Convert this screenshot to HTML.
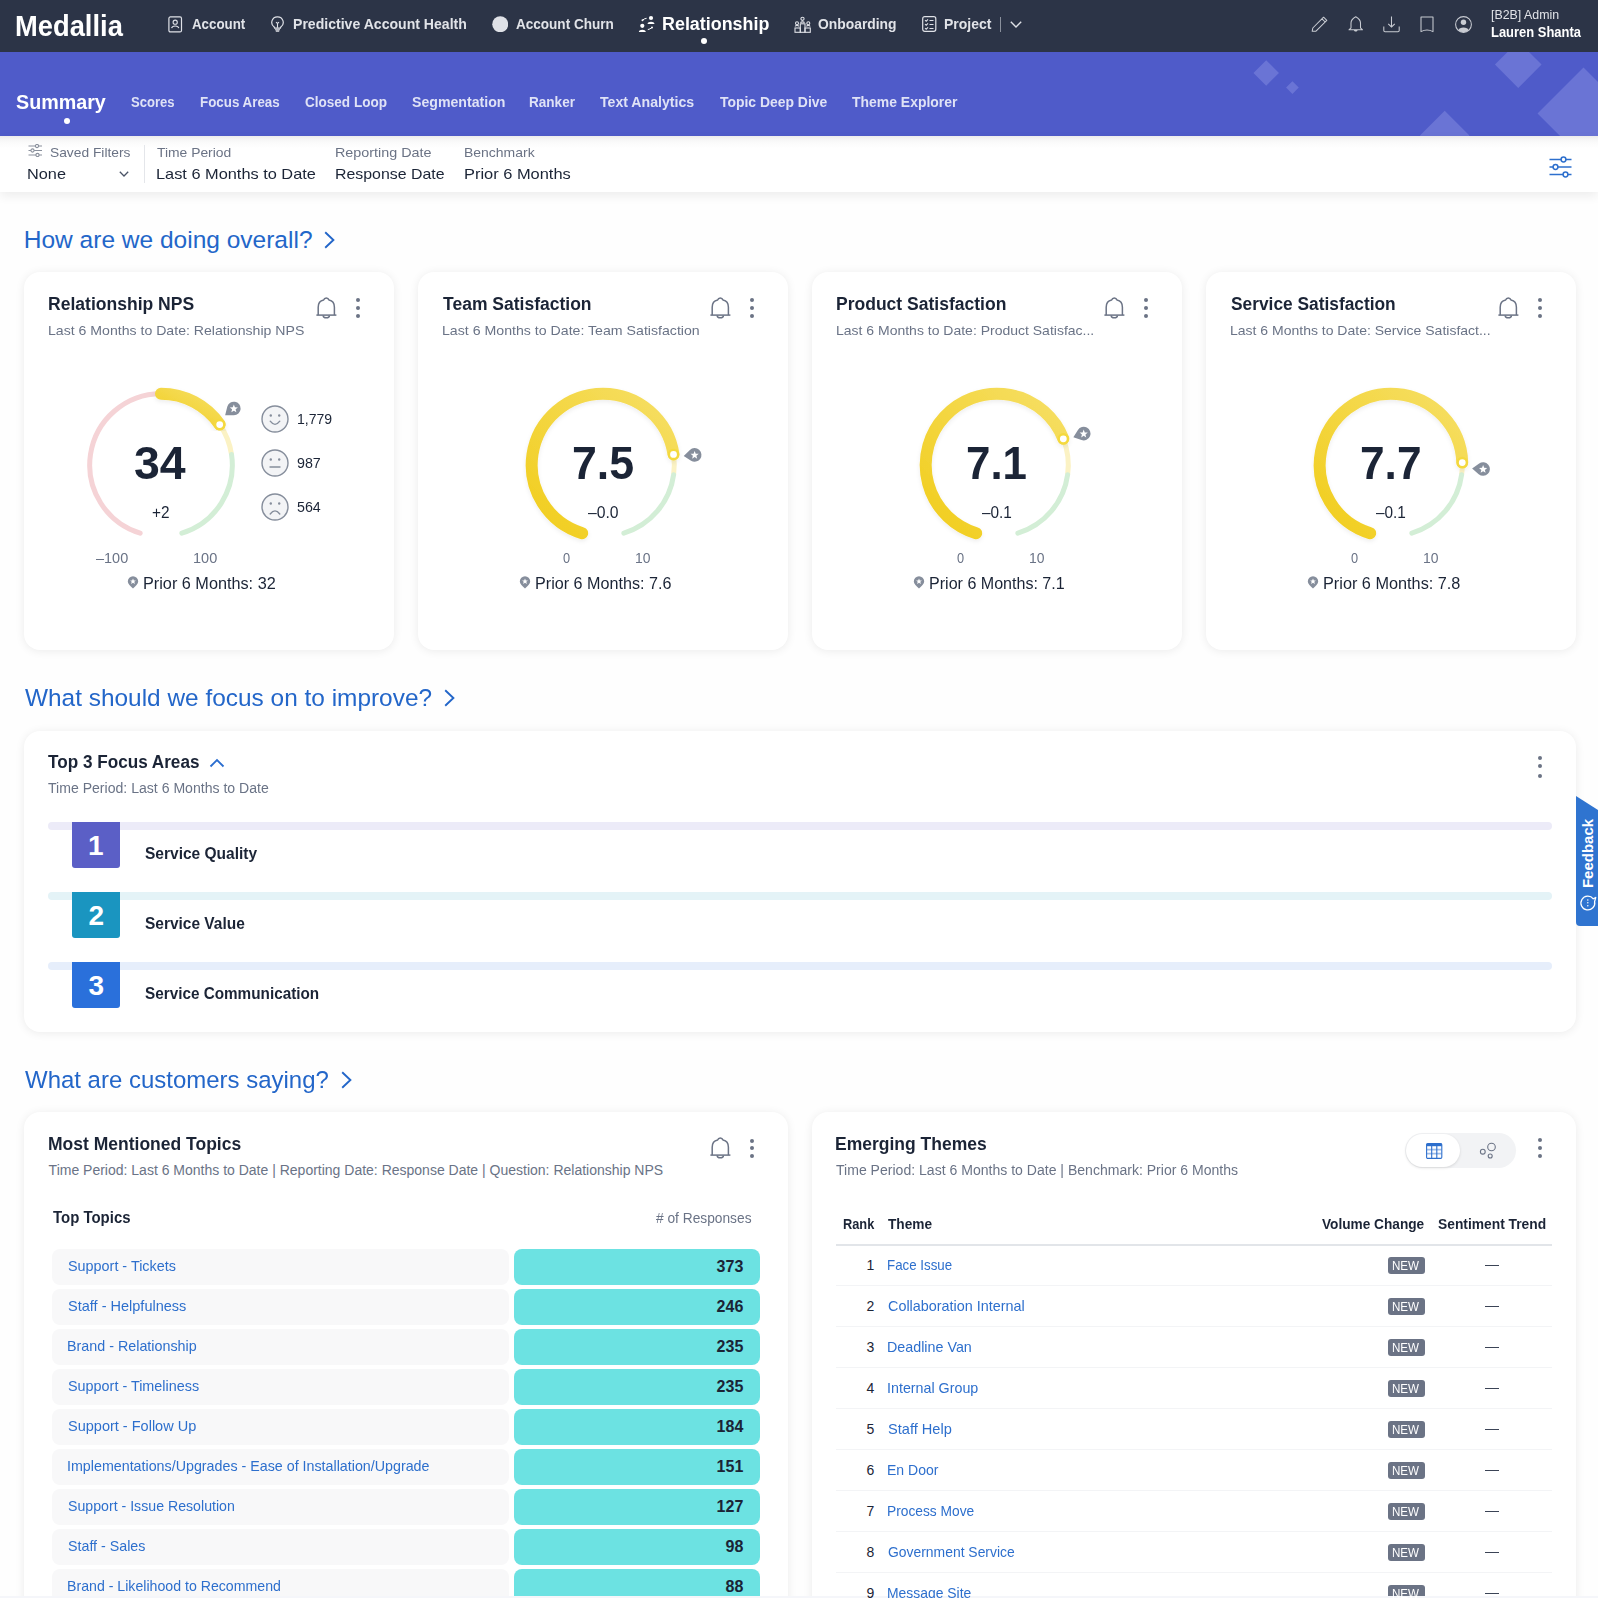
<!DOCTYPE html>
<html><head><meta charset="utf-8"><title>Medallia Summary</title>
<style>
*{box-sizing:border-box;margin:0;padding:0}
html,body{width:1598px;height:1598px;overflow:hidden;background:#fefefe;font-family:"Liberation Sans",sans-serif}
.a{position:absolute}
.t{position:absolute;white-space:nowrap;transform-origin:0 0}
.card{position:absolute;background:#fff;border-radius:16px;box-shadow:0 1px 10px rgba(0,0,0,0.08)}
#top{position:absolute;left:0;top:0;width:1598px;height:52px;background:#2c3447}
#sub{position:absolute;left:0;top:52px;width:1598px;height:84px;background:#4f5bc9;overflow:hidden}
#sub i{position:absolute;display:block;background:#6a74d5;transform:rotate(45deg)}
#filt{position:absolute;left:0;top:136px;width:1598px;height:56px;background:linear-gradient(to bottom,#ececec 0px,#f5f5f5 3px,#fbfbfb 7px,#fff 12px);box-shadow:0 4px 10px rgba(0,0,0,0.07)}
</style></head><body>
<div id="top"></div>
<div id="sub">
<i style="left:1256.8px;top:11.7px;width:18.4px;height:18.4px"></i>
<i style="left:1287.6px;top:30.6px;width:8.8px;height:8.8px"></i>
<i style="left:1501.7px;top:-4.1px;width:32.5px;height:32.5px"></i>
<i style="left:1551.1px;top:28.5px;width:65px;height:65px"></i>
<i style="left:1427.1px;top:66.3px;width:35.4px;height:35.4px"></i>
</div>
<div id="filt"></div>
<div class="card" style="left:24px;top:272px;width:370px;height:378px"></div>
<svg class="a" style="left:315.8px;top:297.3px" width="21" height="22" viewBox="0 0 21 22"><g fill="none" stroke="#6b7385" stroke-width="1.5" stroke-linejoin="round"><path d="M2.2 18.1 L2.2 10.2 C2.2 5.8 4.6 3.6 7.6 3 C8.1 1.5 9.2 0.9 10.3 0.9 C11.4 0.9 12.5 1.5 13 3 C16 3.6 18.4 5.8 18.4 10.2 L18.4 18.1"/><path d="M0.4 18.1 H20.4"/><path d="M7.2 18.4 C7.2 21.6 13.4 21.6 13.4 18.4"/></g></svg>
<div class="a" style="left:356.0px;top:298.0px;width:4.0px;height:4.0px;border-radius:50%;background:#6b7385"></div>
<div class="a" style="left:356.0px;top:306.0px;width:4.0px;height:4.0px;border-radius:50%;background:#6b7385"></div>
<div class="a" style="left:356.0px;top:314.0px;width:4.0px;height:4.0px;border-radius:50%;background:#6b7385"></div>
<svg class="a" style="left:50.5px;top:354.5px" width="220" height="220" viewBox="0 0 220 220"><defs><linearGradient id="yg1" x1="0" y1="1" x2="1" y2="0"><stop offset="0" stop-color="#f1cd1c"/><stop offset="1" stop-color="#f6df66"/></linearGradient><radialGradient id="sh1" cx="0.5" cy="0.5" r="0.5"><stop offset="0.82" stop-color="#000" stop-opacity="0"/><stop offset="1" stop-color="#000" stop-opacity="0.05"/></radialGradient><filter id="ds1" x="-20%" y="-20%" width="140%" height="140%"><feDropShadow dx="0" dy="2" stdDeviation="2.2" flood-color="#000" flood-opacity="0.07"/></filter></defs><path d="M89.15 178.18 A71.3 71.3 0 0 1 110.00 38.70" stroke="#f5d3d6" stroke-width="5" fill="none" stroke-linecap="round"/><path d="M168.70 69.53 A71.3 71.3 0 0 1 180.52 99.46" stroke="#fbf2c4" stroke-width="5" fill="none"/><path d="M180.52 99.46 A71.3 71.3 0 0 1 130.85 178.18" stroke="#d3eed6" stroke-width="5" fill="none" stroke-linecap="round"/><path d="M110.00 38.70 A71.3 71.3 0 0 1 168.70 69.53" stroke="url(#yg1)" stroke-width="12" fill="none" stroke-linecap="round" filter="url(#ds1)"/><circle cx="168.70" cy="69.53" r="4.6" fill="#fff" stroke="#f4d93e" stroke-width="2.4"/><g transform="translate(174.16 60.23) rotate(-37.80)"><path d="M0 0 L6.8 -5.34 A6.8 6.8 0 1 1 6.8 5.34 Z" fill="#868e9c"/></g><polygon points="182.85,49.49 183.94,52.29 186.94,52.46 184.61,54.36 185.38,57.27 182.85,55.64 180.32,57.27 181.09,54.36 178.76,52.46 181.76,52.29" fill="#fff"/></svg>
<svg class="a" style="left:127.4px;top:576.3px" width="12" height="13" viewBox="0 0 12 13"><path d="M6 12.6 C3.5 10 0.8 7.6 0.8 5.4 A5.2 5.2 0 0 1 11.2 5.4 C11.2 7.6 8.5 10 6 12.6 Z" fill="#868e9c"/><polygon points="6,2.4 6.85,4.4 8.9,4.5 7.3,5.8 7.85,7.9 6,6.7 4.15,7.9 4.7,5.8 3.1,4.5 5.15,4.4" fill="#fff"/></svg>
<div class="card" style="left:418px;top:272px;width:370px;height:378px"></div>
<svg class="a" style="left:709.8px;top:297.3px" width="21" height="22" viewBox="0 0 21 22"><g fill="none" stroke="#6b7385" stroke-width="1.5" stroke-linejoin="round"><path d="M2.2 18.1 L2.2 10.2 C2.2 5.8 4.6 3.6 7.6 3 C8.1 1.5 9.2 0.9 10.3 0.9 C11.4 0.9 12.5 1.5 13 3 C16 3.6 18.4 5.8 18.4 10.2 L18.4 18.1"/><path d="M0.4 18.1 H20.4"/><path d="M7.2 18.4 C7.2 21.6 13.4 21.6 13.4 18.4"/></g></svg>
<div class="a" style="left:750.0px;top:298.0px;width:4.0px;height:4.0px;border-radius:50%;background:#6b7385"></div>
<div class="a" style="left:750.0px;top:306.0px;width:4.0px;height:4.0px;border-radius:50%;background:#6b7385"></div>
<div class="a" style="left:750.0px;top:314.0px;width:4.0px;height:4.0px;border-radius:50%;background:#6b7385"></div>
<svg class="a" style="left:493.4px;top:354.5px" width="220" height="220" viewBox="0 0 220 220"><defs><linearGradient id="yg2" x1="0" y1="1" x2="1" y2="0"><stop offset="0" stop-color="#f1cd1c"/><stop offset="1" stop-color="#f6df66"/></linearGradient><radialGradient id="sh2" cx="0.5" cy="0.5" r="0.5"><stop offset="0.82" stop-color="#000" stop-opacity="0"/><stop offset="1" stop-color="#000" stop-opacity="0.05"/></radialGradient><filter id="ds2" x="-20%" y="-20%" width="140%" height="140%"><feDropShadow dx="0" dy="2" stdDeviation="2.2" flood-color="#000" flood-opacity="0.07"/></filter></defs><path d="M180.52 99.46 A71.3 71.3 0 0 1 180.64 119.68" stroke="#fbf2c4" stroke-width="5" fill="none"/><path d="M180.64 119.68 A71.3 71.3 0 0 1 130.85 178.18" stroke="#d3eed6" stroke-width="5" fill="none" stroke-linecap="round"/><path d="M89.15 178.18 A71.3 71.3 0 1 1 180.52 99.46" stroke="url(#yg2)" stroke-width="12" fill="none" stroke-linecap="round" filter="url(#ds2)"/><circle cx="180.52" cy="99.46" r="4.6" fill="#fff" stroke="#f4d93e" stroke-width="2.4"/><g transform="translate(190.71 101.09) rotate(-6.30)"><path d="M0 0 L6.8 -5.34 A6.8 6.8 0 1 1 6.8 5.34 Z" fill="#868e9c"/></g><polygon points="201.64,95.88 202.73,98.69 205.73,98.85 203.40,100.75 204.17,103.66 201.64,102.03 199.12,103.66 199.88,100.75 197.55,98.85 200.56,98.69" fill="#fff"/></svg>
<svg class="a" style="left:519.4px;top:576.3px" width="12" height="13" viewBox="0 0 12 13"><path d="M6 12.6 C3.5 10 0.8 7.6 0.8 5.4 A5.2 5.2 0 0 1 11.2 5.4 C11.2 7.6 8.5 10 6 12.6 Z" fill="#868e9c"/><polygon points="6,2.4 6.85,4.4 8.9,4.5 7.3,5.8 7.85,7.9 6,6.7 4.15,7.9 4.7,5.8 3.1,4.5 5.15,4.4" fill="#fff"/></svg>
<div class="card" style="left:812px;top:272px;width:370px;height:378px"></div>
<svg class="a" style="left:1103.8px;top:297.3px" width="21" height="22" viewBox="0 0 21 22"><g fill="none" stroke="#6b7385" stroke-width="1.5" stroke-linejoin="round"><path d="M2.2 18.1 L2.2 10.2 C2.2 5.8 4.6 3.6 7.6 3 C8.1 1.5 9.2 0.9 10.3 0.9 C11.4 0.9 12.5 1.5 13 3 C16 3.6 18.4 5.8 18.4 10.2 L18.4 18.1"/><path d="M0.4 18.1 H20.4"/><path d="M7.2 18.4 C7.2 21.6 13.4 21.6 13.4 18.4"/></g></svg>
<div class="a" style="left:1144.0px;top:298.0px;width:4.0px;height:4.0px;border-radius:50%;background:#6b7385"></div>
<div class="a" style="left:1144.0px;top:306.0px;width:4.0px;height:4.0px;border-radius:50%;background:#6b7385"></div>
<div class="a" style="left:1144.0px;top:314.0px;width:4.0px;height:4.0px;border-radius:50%;background:#6b7385"></div>
<svg class="a" style="left:887.4px;top:354.5px" width="220" height="220" viewBox="0 0 220 220"><defs><linearGradient id="yg3" x1="0" y1="1" x2="1" y2="0"><stop offset="0" stop-color="#f1cd1c"/><stop offset="1" stop-color="#f6df66"/></linearGradient><radialGradient id="sh3" cx="0.5" cy="0.5" r="0.5"><stop offset="0.82" stop-color="#000" stop-opacity="0"/><stop offset="1" stop-color="#000" stop-opacity="0.05"/></radialGradient><filter id="ds3" x="-20%" y="-20%" width="140%" height="140%"><feDropShadow dx="0" dy="2" stdDeviation="2.2" flood-color="#000" flood-opacity="0.07"/></filter></defs><path d="M176.32 83.82 A71.3 71.3 0 0 1 180.64 119.68" stroke="#fbf2c4" stroke-width="5" fill="none"/><path d="M180.64 119.68 A71.3 71.3 0 0 1 130.85 178.18" stroke="#d3eed6" stroke-width="5" fill="none" stroke-linecap="round"/><path d="M89.15 178.18 A71.3 71.3 0 1 1 176.32 83.82" stroke="url(#yg3)" stroke-width="12" fill="none" stroke-linecap="round" filter="url(#ds3)"/><circle cx="176.32" cy="83.82" r="4.6" fill="#fff" stroke="#f4d93e" stroke-width="2.4"/><g transform="translate(186.35 82.36) rotate(-19.90)"><path d="M0 0 L6.8 -5.34 A6.8 6.8 0 1 1 6.8 5.34 Z" fill="#868e9c"/></g><polygon points="196.69,74.62 197.78,77.42 200.78,77.59 198.45,79.49 199.22,82.40 196.69,80.77 194.17,82.40 194.94,79.49 192.61,77.59 195.61,77.42" fill="#fff"/></svg>
<svg class="a" style="left:913.4px;top:576.3px" width="12" height="13" viewBox="0 0 12 13"><path d="M6 12.6 C3.5 10 0.8 7.6 0.8 5.4 A5.2 5.2 0 0 1 11.2 5.4 C11.2 7.6 8.5 10 6 12.6 Z" fill="#868e9c"/><polygon points="6,2.4 6.85,4.4 8.9,4.5 7.3,5.8 7.85,7.9 6,6.7 4.15,7.9 4.7,5.8 3.1,4.5 5.15,4.4" fill="#fff"/></svg>
<div class="card" style="left:1206px;top:272px;width:370px;height:378px"></div>
<svg class="a" style="left:1497.8px;top:297.3px" width="21" height="22" viewBox="0 0 21 22"><g fill="none" stroke="#6b7385" stroke-width="1.5" stroke-linejoin="round"><path d="M2.2 18.1 L2.2 10.2 C2.2 5.8 4.6 3.6 7.6 3 C8.1 1.5 9.2 0.9 10.3 0.9 C11.4 0.9 12.5 1.5 13 3 C16 3.6 18.4 5.8 18.4 10.2 L18.4 18.1"/><path d="M0.4 18.1 H20.4"/><path d="M7.2 18.4 C7.2 21.6 13.4 21.6 13.4 18.4"/></g></svg>
<div class="a" style="left:1538.0px;top:298.0px;width:4.0px;height:4.0px;border-radius:50%;background:#6b7385"></div>
<div class="a" style="left:1538.0px;top:306.0px;width:4.0px;height:4.0px;border-radius:50%;background:#6b7385"></div>
<div class="a" style="left:1538.0px;top:314.0px;width:4.0px;height:4.0px;border-radius:50%;background:#6b7385"></div>
<svg class="a" style="left:1281.4px;top:354.5px" width="220" height="220" viewBox="0 0 220 220"><defs><linearGradient id="yg4" x1="0" y1="1" x2="1" y2="0"><stop offset="0" stop-color="#f1cd1c"/><stop offset="1" stop-color="#f6df66"/></linearGradient><radialGradient id="sh4" cx="0.5" cy="0.5" r="0.5"><stop offset="0.82" stop-color="#000" stop-opacity="0"/><stop offset="1" stop-color="#000" stop-opacity="0.05"/></radialGradient><filter id="ds4" x="-20%" y="-20%" width="140%" height="140%"><feDropShadow dx="0" dy="2" stdDeviation="2.2" flood-color="#000" flood-opacity="0.07"/></filter></defs><path d="M181.26 107.54 A71.3 71.3 0 0 1 180.64 119.68" stroke="#fbf2c4" stroke-width="5" fill="none"/><path d="M180.64 119.68 A71.3 71.3 0 0 1 130.85 178.18" stroke="#d3eed6" stroke-width="5" fill="none" stroke-linecap="round"/><path d="M89.15 178.18 A71.3 71.3 0 1 1 181.26 107.54" stroke="url(#yg4)" stroke-width="12" fill="none" stroke-linecap="round" filter="url(#ds4)"/><circle cx="181.26" cy="107.54" r="4.6" fill="#fff" stroke="#f4d93e" stroke-width="2.4"/><g transform="translate(191.12 113.54) rotate(2.50)"><path d="M0 0 L6.8 -5.34 A6.8 6.8 0 1 1 6.8 5.34 Z" fill="#868e9c"/></g><polygon points="202.11,110.02 203.20,112.83 206.20,112.99 203.87,114.89 204.64,117.80 202.11,116.17 199.58,117.80 200.35,114.89 198.02,112.99 201.02,112.83" fill="#fff"/></svg>
<svg class="a" style="left:1307.4px;top:576.3px" width="12" height="13" viewBox="0 0 12 13"><path d="M6 12.6 C3.5 10 0.8 7.6 0.8 5.4 A5.2 5.2 0 0 1 11.2 5.4 C11.2 7.6 8.5 10 6 12.6 Z" fill="#868e9c"/><polygon points="6,2.4 6.85,4.4 8.9,4.5 7.3,5.8 7.85,7.9 6,6.7 4.15,7.9 4.7,5.8 3.1,4.5 5.15,4.4" fill="#fff"/></svg>
<svg class="a" style="left:259.8px;top:404.4px" width="30" height="30" viewBox="-15 -15 30 30"><circle cx="0" cy="0" r="13" fill="#f3f4f6" stroke="#868e9c" stroke-width="1.4"/><circle cx="-4.2" cy="-3.5" r="1.2" fill="#868e9c"/><circle cx="4.2" cy="-3.5" r="1.2" fill="#868e9c"/><path d="M-4.8 2.2 Q0 8.5 4.8 2.2" fill="none" stroke="#868e9c" stroke-width="1.4" stroke-linecap="round"/></svg>
<svg class="a" style="left:259.8px;top:448.4px" width="30" height="30" viewBox="-15 -15 30 30"><circle cx="0" cy="0" r="13" fill="#f3f4f6" stroke="#868e9c" stroke-width="1.4"/><circle cx="-4.2" cy="-3.5" r="1.2" fill="#868e9c"/><circle cx="4.2" cy="-3.5" r="1.2" fill="#868e9c"/><path d="M-5 4 L5 4" fill="none" stroke="#868e9c" stroke-width="1.4" stroke-linecap="round"/></svg>
<svg class="a" style="left:259.8px;top:492.4px" width="30" height="30" viewBox="-15 -15 30 30"><circle cx="0" cy="0" r="13" fill="#f3f4f6" stroke="#868e9c" stroke-width="1.4"/><circle cx="-4.2" cy="-3.5" r="1.2" fill="#868e9c"/><circle cx="4.2" cy="-3.5" r="1.2" fill="#868e9c"/><path d="M-4.8 7 Q0 0.8 4.8 7" fill="none" stroke="#868e9c" stroke-width="1.4" stroke-linecap="round"/></svg>
<div class="card" style="left:24px;top:731px;width:1552px;height:301px"></div>
<svg class="a" style="left:209px;top:757px" width="16" height="11" viewBox="0 0 16 11"><path d="M1.5 9.5 L8 3 L14.5 9.5" fill="none" stroke="#2a6dcf" stroke-width="1.8"/></svg>
<div class="a" style="left:1538.0px;top:756.0px;width:4.0px;height:4.0px;border-radius:50%;background:#6b7385"></div>
<div class="a" style="left:1538.0px;top:764.0px;width:4.0px;height:4.0px;border-radius:50%;background:#6b7385"></div>
<div class="a" style="left:1538.0px;top:774.0px;width:4.0px;height:4.0px;border-radius:50%;background:#6b7385"></div>
<div class="a" style="left:48px;top:822.3px;width:1504px;height:8px;border-radius:4px;background:#ecebf8"></div>
<div class="a" style="left:72px;top:822.3px;width:48px;height:46px;border-radius:0 0 3px 3px;background:#5b5fc6"></div>
<div class="a" style="left:48px;top:892.3px;width:1504px;height:8px;border-radius:4px;background:#e4f3f7"></div>
<div class="a" style="left:72px;top:892.3px;width:48px;height:46px;border-radius:0 0 3px 3px;background:#1a95c0"></div>
<div class="a" style="left:48px;top:962.3px;width:1504px;height:8px;border-radius:4px;background:#e6eefb"></div>
<div class="a" style="left:72px;top:962.3px;width:48px;height:46px;border-radius:0 0 3px 3px;background:#2a70db"></div>
<div class="card" style="left:24px;top:1112px;width:764px;height:600px"></div>
<svg class="a" style="left:709.7px;top:1137.4px" width="21" height="22" viewBox="0 0 21 22"><g fill="none" stroke="#6b7385" stroke-width="1.5" stroke-linejoin="round"><path d="M2.2 18.1 L2.2 10.2 C2.2 5.8 4.6 3.6 7.6 3 C8.1 1.5 9.2 0.9 10.3 0.9 C11.4 0.9 12.5 1.5 13 3 C16 3.6 18.4 5.8 18.4 10.2 L18.4 18.1"/><path d="M0.4 18.1 H20.4"/><path d="M7.2 18.4 C7.2 21.6 13.4 21.6 13.4 18.4"/></g></svg>
<div class="a" style="left:750.0px;top:1139.0px;width:4.0px;height:4.0px;border-radius:50%;background:#6b7385"></div>
<div class="a" style="left:750.0px;top:1146.0px;width:4.0px;height:4.0px;border-radius:50%;background:#6b7385"></div>
<div class="a" style="left:750.0px;top:1154.0px;width:4.0px;height:4.0px;border-radius:50%;background:#6b7385"></div>
<div class="a" style="left:52px;top:1249px;width:456.5px;height:35.5px;border-radius:8px;background:#f8f8f9"></div>
<div class="a" style="left:513.7px;top:1249px;width:246.3px;height:35.5px;border-radius:8px;background:#6ce2e2"></div>
<div class="a" style="left:52px;top:1289px;width:456.5px;height:35.5px;border-radius:8px;background:#f8f8f9"></div>
<div class="a" style="left:513.7px;top:1289px;width:246.3px;height:35.5px;border-radius:8px;background:#6ce2e2"></div>
<div class="a" style="left:52px;top:1329px;width:456.5px;height:35.5px;border-radius:8px;background:#f8f8f9"></div>
<div class="a" style="left:513.7px;top:1329px;width:246.3px;height:35.5px;border-radius:8px;background:#6ce2e2"></div>
<div class="a" style="left:52px;top:1369px;width:456.5px;height:35.5px;border-radius:8px;background:#f8f8f9"></div>
<div class="a" style="left:513.7px;top:1369px;width:246.3px;height:35.5px;border-radius:8px;background:#6ce2e2"></div>
<div class="a" style="left:52px;top:1409px;width:456.5px;height:35.5px;border-radius:8px;background:#f8f8f9"></div>
<div class="a" style="left:513.7px;top:1409px;width:246.3px;height:35.5px;border-radius:8px;background:#6ce2e2"></div>
<div class="a" style="left:52px;top:1449px;width:456.5px;height:35.5px;border-radius:8px;background:#f8f8f9"></div>
<div class="a" style="left:513.7px;top:1449px;width:246.3px;height:35.5px;border-radius:8px;background:#6ce2e2"></div>
<div class="a" style="left:52px;top:1489px;width:456.5px;height:35.5px;border-radius:8px;background:#f8f8f9"></div>
<div class="a" style="left:513.7px;top:1489px;width:246.3px;height:35.5px;border-radius:8px;background:#6ce2e2"></div>
<div class="a" style="left:52px;top:1529px;width:456.5px;height:35.5px;border-radius:8px;background:#f8f8f9"></div>
<div class="a" style="left:513.7px;top:1529px;width:246.3px;height:35.5px;border-radius:8px;background:#6ce2e2"></div>
<div class="a" style="left:52px;top:1569px;width:456.5px;height:35.5px;border-radius:8px;background:#f8f8f9"></div>
<div class="a" style="left:513.7px;top:1569px;width:246.3px;height:35.5px;border-radius:8px;background:#6ce2e2"></div>
<div class="card" style="left:812px;top:1112px;width:764px;height:600px"></div>
<div class="a" style="left:1405px;top:1132.7px;width:110.8px;height:35.4px;border-radius:18px;background:#f2f3f5"></div>
<div class="a" style="left:1406px;top:1134px;width:53.8px;height:32.6px;border-radius:17px;background:#fff;box-shadow:0 1px 3px rgba(0,0,0,0.12)"></div>
<svg class="a" style="left:1426px;top:1142.5px" width="17" height="16" viewBox="0 0 17 16"><rect x="0.6" y="0.6" width="15.2" height="14.8" rx="1.2" fill="none" stroke="#2d6fcd" stroke-width="1.1"/><rect x="0.6" y="0.6" width="15.2" height="2.6" fill="#2d6fcd"/><path d="M5.7 3 V15.4 M10.8 3 V15.4" stroke="#2d6fcd" stroke-width="1.1"/><path d="M1 6.7 H15.4 M1 10.6 H15.4" stroke="#2d6fcd" stroke-width="1.8" opacity="0.45"/></svg>
<svg class="a" style="left:1478px;top:1141px" width="20" height="20" viewBox="0 0 20 20"><circle cx="4.8" cy="10.7" r="2.4" fill="none" stroke="#6b7385" stroke-width="1.1"/><circle cx="13.5" cy="6" r="3.8" fill="none" stroke="#6b7385" stroke-width="1.1"/><circle cx="12.2" cy="15" r="2" fill="none" stroke="#6b7385" stroke-width="1.1"/></svg>
<div class="a" style="left:1538.0px;top:1138.0px;width:4.0px;height:4.0px;border-radius:50%;background:#6b7385"></div>
<div class="a" style="left:1538.0px;top:1146.0px;width:4.0px;height:4.0px;border-radius:50%;background:#6b7385"></div>
<div class="a" style="left:1538.0px;top:1154.0px;width:4.0px;height:4.0px;border-radius:50%;background:#6b7385"></div>
<div class="a" style="left:836px;top:1244px;width:716px;height:2px;background:#e2e5e9"></div>
<div class="a" style="left:1387.7px;top:1256.7px;width:37px;height:17.7px;border-radius:3px;background:#6b7385"></div>
<div class="a" style="left:1484.6px;top:1265.3px;width:14px;height:1px;background:#3b4456"></div>
<div class="a" style="left:836px;top:1285.3px;width:716px;height:1px;background:#f3f4f6"></div>
<div class="a" style="left:1387.7px;top:1297.7px;width:37px;height:17.7px;border-radius:3px;background:#6b7385"></div>
<div class="a" style="left:1484.6px;top:1306.3px;width:14px;height:1px;background:#3b4456"></div>
<div class="a" style="left:836px;top:1326.3px;width:716px;height:1px;background:#f3f4f6"></div>
<div class="a" style="left:1387.7px;top:1338.7px;width:37px;height:17.7px;border-radius:3px;background:#6b7385"></div>
<div class="a" style="left:1484.6px;top:1347.3px;width:14px;height:1px;background:#3b4456"></div>
<div class="a" style="left:836px;top:1367.3px;width:716px;height:1px;background:#f3f4f6"></div>
<div class="a" style="left:1387.7px;top:1379.7px;width:37px;height:17.7px;border-radius:3px;background:#6b7385"></div>
<div class="a" style="left:1484.6px;top:1388.3px;width:14px;height:1px;background:#3b4456"></div>
<div class="a" style="left:836px;top:1408.3px;width:716px;height:1px;background:#f3f4f6"></div>
<div class="a" style="left:1387.7px;top:1420.7px;width:37px;height:17.7px;border-radius:3px;background:#6b7385"></div>
<div class="a" style="left:1484.6px;top:1429.3px;width:14px;height:1px;background:#3b4456"></div>
<div class="a" style="left:836px;top:1449.3px;width:716px;height:1px;background:#f3f4f6"></div>
<div class="a" style="left:1387.7px;top:1461.7px;width:37px;height:17.7px;border-radius:3px;background:#6b7385"></div>
<div class="a" style="left:1484.6px;top:1470.3px;width:14px;height:1px;background:#3b4456"></div>
<div class="a" style="left:836px;top:1490.3px;width:716px;height:1px;background:#f3f4f6"></div>
<div class="a" style="left:1387.7px;top:1502.7px;width:37px;height:17.7px;border-radius:3px;background:#6b7385"></div>
<div class="a" style="left:1484.6px;top:1511.3px;width:14px;height:1px;background:#3b4456"></div>
<div class="a" style="left:836px;top:1531.3px;width:716px;height:1px;background:#f3f4f6"></div>
<div class="a" style="left:1387.7px;top:1543.7px;width:37px;height:17.7px;border-radius:3px;background:#6b7385"></div>
<div class="a" style="left:1484.6px;top:1552.3px;width:14px;height:1px;background:#3b4456"></div>
<div class="a" style="left:836px;top:1572.3px;width:716px;height:1px;background:#f3f4f6"></div>
<div class="a" style="left:1387.7px;top:1584.7px;width:37px;height:17.7px;border-radius:3px;background:#6b7385"></div>
<div class="a" style="left:1484.6px;top:1593.3px;width:14px;height:1px;background:#3b4456"></div>
<div class="a" style="left:836px;top:1613.3px;width:716px;height:1px;background:#f3f4f6"></div>
<svg class="a" style="left:167.5px;top:15.5px" width="15" height="17" viewBox="0 0 15 17"><rect x="0.9" y="0.9" width="12.6" height="15" rx="1.5" fill="none" stroke="#dfe1e7" stroke-width="1.2"/><circle cx="7.2" cy="6.2" r="2.1" fill="none" stroke="#dfe1e7" stroke-width="1.1"/><path d="M3.6 12.2 C4.2 9.3 10.2 9.3 10.8 12.2" fill="none" stroke="#dfe1e7" stroke-width="1.1"/></svg>
<svg class="a" style="left:271px;top:16px" width="13" height="16" viewBox="0 0 13 16"><path d="M6.5 0.8 A5.6 5.6 0 0 0 3.2 11 L3.6 12.2 H9.4 L9.8 11 A5.6 5.6 0 0 0 6.5 0.8 Z" fill="none" stroke="#dfe1e7" stroke-width="1.2"/><path d="M4 13.7 H9 M4.8 15.1 H8.2 M6.5 11.8 V7 M5 6.2 L6.5 7.5 L8 6.2" fill="none" stroke="#dfe1e7" stroke-width="1.1"/></svg>
<svg class="a" style="left:491.5px;top:15.5px" width="16.5" height="16.5" viewBox="0 0 16.5 16.5"><circle cx="8.25" cy="8.25" r="8" fill="#dfe1e7"/></svg>
<svg class="a" style="left:637px;top:15px" width="18" height="18" viewBox="0 0 18 18"><circle cx="14" cy="3" r="2.1" fill="#fff"/><path d="M10.5 8.9 C10.7 5.9 17.3 5.9 17.5 8.9 Z" fill="#fff"/><circle cx="5.3" cy="10.8" r="2.1" fill="#fff"/><path d="M1.8 16.9 C2 13.9 8.6 13.9 8.8 16.9 Z" fill="#fff"/><circle cx="5.5" cy="5.3" r="1" fill="#fff"/><path d="M5.5 5.3 Q7 3.6 9.6 3.3" fill="none" stroke="#fff" stroke-width="1"/><circle cx="15" cy="12.5" r="1" fill="#fff"/><path d="M10.8 14.6 Q13 14.2 15 12.5" fill="none" stroke="#fff" stroke-width="1"/></svg>
<svg class="a" style="left:793.5px;top:15.5px" width="17" height="17" viewBox="0 0 17 17"><g fill="none" stroke="#dfe1e7" stroke-width="1.1"><circle cx="8.5" cy="2.8" r="1.6"/><circle cx="3" cy="7.3" r="1.5"/><circle cx="14.3" cy="7.3" r="1.5"/><path d="M6.5 6.8 C7 5.5 10 5.5 10.5 6.8 M1.2 10.5 C1.5 9 4.5 9 4.8 10.5 M12.5 10.5 C12.8 9 15.8 9 16.1 10.5"/><rect x="1" y="12" width="5.3" height="4.3"/><rect x="6.3" y="7.8" width="4.7" height="8.5"/><rect x="11" y="12" width="5.3" height="4.3"/></g></svg>
<svg class="a" style="left:922px;top:16px" width="14.5" height="16" viewBox="0 0 14.5 16"><rect x="0.7" y="0.7" width="13.1" height="14.6" rx="2" fill="none" stroke="#dfe1e7" stroke-width="1.2"/><path d="M3 4.2 L4.2 5.3 L6 3.3 M3 8.2 L4.2 9.3 L6 7.3 M3 12.2 L4.2 13.3 L6 11.3 M7.5 4.5 H11.5 M7.5 8.5 H11.5 M7.5 12.5 H11.5" fill="none" stroke="#dfe1e7" stroke-width="1.1"/></svg>
<div class="a" style="left:999.6px;top:17px;width:1.3px;height:15px;background:#8a909c"></div>
<svg class="a" style="left:1009.5px;top:21px" width="12" height="7" viewBox="0 0 12 7"><path d="M0.8 0.8 L6 6 L11.2 0.8" fill="none" stroke="#dfe1e7" stroke-width="1.4"/></svg>
<svg class="a" style="left:1310.5px;top:16px" width="17.5" height="16.5" viewBox="0 0 17.5 16.5"><path d="M1.2 15.3 L1.8 12 L12.6 1.2 L15.8 4.4 L5 15.2 Z M11 2.8 L14.2 6" fill="none" stroke="#c8cbd2" stroke-width="1.05" stroke-linejoin="round"/></svg>
<svg class="a" style="left:1347.5px;top:16px" width="15.5" height="16" viewBox="0 0 15.5 16"><path d="M7.75 0.8 C4.6 2.5 3 4.1 3 7 L3 11.8 L1 13.8 L14.5 13.8 L12.5 11.8 L12.5 7 C12.5 4.1 10.9 2.5 7.75 0.8 Z" fill="none" stroke="#c8cbd2" stroke-width="1.05" stroke-linejoin="round"/><path d="M6 14 C6 16 9.5 16 9.5 14 Z" fill="#c8cbd2"/></svg>
<svg class="a" style="left:1382.5px;top:16px" width="17" height="16.5" viewBox="0 0 17 16.5"><path d="M8.5 0.5 V11 M5.2 7.8 L8.5 11 L11.8 7.8 M0.8 10.5 V14.5 Q0.8 15.8 2 15.8 H15 Q16.2 15.8 16.2 14.5 V10.5" fill="none" stroke="#c8cbd2" stroke-width="1.05"/></svg>
<svg class="a" style="left:1420px;top:16px" width="14" height="16.5" viewBox="0 0 14 16.5"><path d="M1 0.9 H13 V15.6 Q7 12.5 1 15.6 Z" fill="none" stroke="#c8cbd2" stroke-width="1.05" stroke-linejoin="round"/></svg>
<svg class="a" style="left:1454.5px;top:15.5px" width="17" height="17" viewBox="0 0 17 17"><circle cx="8.5" cy="8.5" r="7.9" fill="none" stroke="#c8cbd2" stroke-width="1.05"/><circle cx="8.5" cy="6.3" r="2.7" fill="#c8cbd2"/><path d="M3.3 14.3 C4 10.5 13 10.5 13.7 14.3 A7.9 7.9 0 0 1 3.3 14.3 Z" fill="#c8cbd2"/></svg>
<div class="a" style="left:701px;top:37.8px;width:6px;height:6px;border-radius:50%;background:#fff"></div>
<div class="a" style="left:64px;top:117.8px;width:6px;height:6px;border-radius:50%;background:#fff"></div>
<svg class="a" style="left:28px;top:143.5px" width="14" height="13" viewBox="0 0 14 13"><g fill="none" stroke="#8a909c" stroke-width="1.1"><path d="M0.5 2 H14 M0.5 6.5 H14 M0.5 11 H14"/><circle cx="9" cy="2" r="1.6" fill="#fff"/><circle cx="4.5" cy="6.5" r="1.6" fill="#fff"/><circle cx="9.5" cy="11" r="1.6" fill="#fff"/></g></svg>
<svg class="a" style="left:118.5px;top:171px" width="10" height="6" viewBox="0 0 10 6"><path d="M0.8 0.8 L5 5 L9.2 0.8" fill="none" stroke="#4a5366" stroke-width="1.3"/></svg>
<div class="a" style="left:143.5px;top:144.8px;width:1.2px;height:38px;background:#e4e6ea"></div>
<svg class="a" style="left:1548.5px;top:156px" width="23" height="22.5" viewBox="0 0 23 22.5"><g fill="none" stroke="#2d6fcd" stroke-width="1.5"><path d="M0.5 3.5 H22.5 M0.5 11 H22.5 M0.5 18.5 H22.5"/><circle cx="14.5" cy="3.5" r="2.4" fill="#fff"/><circle cx="6.5" cy="11" r="2.4" fill="#fff"/><circle cx="16.5" cy="18.5" r="2.4" fill="#fff"/></g></svg>
<svg class="a" style="left:1576px;top:796px" width="22" height="130" viewBox="0 0 22 130"><path d="M0 0 L22 14 V130 H4 A4 4 0 0 1 0 126 Z" fill="#2f74d0"/><path d="M17.3 102.8 A6.9 6.9 0 1 0 18.6 105.6 L19.7 101.5 Z" fill="none" stroke="#fff" stroke-width="1.3" stroke-linejoin="round"/><circle cx="11.8" cy="103.9" r="0.75" fill="#fff"/><circle cx="11.8" cy="106.8" r="0.75" fill="#fff"/><circle cx="11.8" cy="109.7" r="0.75" fill="#fff"/></svg>
<div class="a" style="left:1548px;top:845.6px;width:78px;height:15px;line-height:15px;font-size:15px;font-weight:bold;color:#fff;text-align:center;transform:rotate(-90deg)">Feedback</div>
<div class="a" style="left:0;top:1596px;width:1598px;height:2px;background:#f5f6fa"></div>
<svg class="a" style="left:324px;top:231px" width="11" height="18" viewBox="0 0 11 18"><path d="M1.2 1.2 L9.4 9 L1.2 16.8" fill="none" stroke="#2366c9" stroke-width="1.9"/></svg>
<svg class="a" style="left:444px;top:689px" width="11" height="18" viewBox="0 0 11 18"><path d="M1.2 1.2 L9.4 9 L1.2 16.8" fill="none" stroke="#2366c9" stroke-width="1.9"/></svg>
<svg class="a" style="left:341px;top:1070.5px" width="11" height="18" viewBox="0 0 11 18"><path d="M1.2 1.2 L9.4 9 L1.2 16.8" fill="none" stroke="#2366c9" stroke-width="1.9"/></svg>
<div class="t" style="left:14.56px;top:12.00px;font-size:29px;line-height:29px;font-weight:bold;color:#ffffff;transform:scaleX(0.9423)">Medallia</div>
<div class="t" style="left:191.50px;top:16.00px;font-size:15px;line-height:15px;font-weight:bold;color:#e1e3e8;transform:scaleX(0.8883)">Account</div>
<div class="t" style="left:292.56px;top:16.00px;font-size:15px;line-height:15px;font-weight:bold;color:#e1e3e8;transform:scaleX(0.9382)">Predictive Account Health</div>
<div class="t" style="left:516.40px;top:16.00px;font-size:15px;line-height:15px;font-weight:bold;color:#e1e3e8;transform:scaleX(0.9023)">Account Churn</div>
<div class="t" style="left:661.81px;top:15.00px;font-size:18px;line-height:18px;font-weight:bold;color:#ffffff;transform:scaleX(0.9943)">Relationship</div>
<div class="t" style="left:818.00px;top:16.00px;font-size:15px;line-height:15px;font-weight:bold;color:#e1e3e8;transform:scaleX(0.9242)">Onboarding</div>
<div class="t" style="left:944.07px;top:16.00px;font-size:15px;line-height:15px;font-weight:bold;color:#e1e3e8;transform:scaleX(0.9327)">Project</div>
<div class="t" style="left:1491.40px;top:9.00px;font-size:12.5px;line-height:12.5px;font-weight:normal;color:#e1e3e8;transform:scaleX(0.9896)">[B2B] Admin</div>
<div class="t" style="left:1490.54px;top:24.00px;font-size:15px;line-height:15px;font-weight:bold;color:#ffffff;transform:scaleX(0.8628)">Lauren Shanta</div>
<div class="t" style="left:16.30px;top:91.00px;font-size:21px;line-height:21px;font-weight:bold;color:#ffffff;transform:scaleX(0.9382)">Summary</div>
<div class="t" style="left:131.00px;top:95.00px;font-size:14.5px;line-height:14.5px;font-weight:bold;color:#dfe2f6;transform:scaleX(0.9006)">Scores</div>
<div class="t" style="left:199.50px;top:95.00px;font-size:14.5px;line-height:14.5px;font-weight:bold;color:#dfe2f6;transform:scaleX(0.9210)">Focus Areas</div>
<div class="t" style="left:304.60px;top:95.00px;font-size:14.5px;line-height:14.5px;font-weight:bold;color:#dfe2f6;transform:scaleX(0.9336)">Closed Loop</div>
<div class="t" style="left:411.80px;top:95.00px;font-size:14.5px;line-height:14.5px;font-weight:bold;color:#dfe2f6;transform:scaleX(0.9746)">Segmentation</div>
<div class="t" style="left:529.40px;top:95.00px;font-size:14.5px;line-height:14.5px;font-weight:bold;color:#dfe2f6;transform:scaleX(0.9350)">Ranker</div>
<div class="t" style="left:600.30px;top:95.00px;font-size:14.5px;line-height:14.5px;font-weight:bold;color:#dfe2f6;transform:scaleX(0.9735)">Text Analytics</div>
<div class="t" style="left:720.00px;top:95.00px;font-size:14.5px;line-height:14.5px;font-weight:bold;color:#dfe2f6;transform:scaleX(0.9600)">Topic Deep Dive</div>
<div class="t" style="left:852.00px;top:95.00px;font-size:14.5px;line-height:14.5px;font-weight:bold;color:#dfe2f6;transform:scaleX(0.9623)">Theme Explorer</div>
<div class="t" style="left:50.00px;top:146.00px;font-size:13px;line-height:13px;font-weight:normal;color:#6b7385;transform:scaleX(1.0608)">Saved Filters</div>
<div class="t" style="left:27.21px;top:166.00px;font-size:15px;line-height:15px;font-weight:normal;color:#1b2436;transform:scaleX(1.0864)">None</div>
<div class="t" style="left:157.00px;top:146.00px;font-size:13px;line-height:13px;font-weight:normal;color:#6b7385;transform:scaleX(1.0668)">Time Period</div>
<div class="t" style="left:155.91px;top:166.00px;font-size:15px;line-height:15px;font-weight:normal;color:#1b2436;transform:scaleX(1.0894)">Last 6 Months to Date</div>
<div class="t" style="left:335.20px;top:146.00px;font-size:13px;line-height:13px;font-weight:normal;color:#6b7385;transform:scaleX(1.1031)">Reporting Date</div>
<div class="t" style="left:335.24px;top:166.00px;font-size:15px;line-height:15px;font-weight:normal;color:#1b2436;transform:scaleX(1.0592)">Response Date</div>
<div class="t" style="left:464.13px;top:146.00px;font-size:13px;line-height:13px;font-weight:normal;color:#6b7385;transform:scaleX(1.0743)">Benchmark</div>
<div class="t" style="left:464.11px;top:166.00px;font-size:15px;line-height:15px;font-weight:normal;color:#1b2436;transform:scaleX(1.0944)">Prior 6 Months</div>
<div class="t" style="left:23.80px;top:228.00px;font-size:24.5px;line-height:24.5px;font-weight:normal;color:#2366c9">How are we doing overall?</div>
<div class="t" style="left:24.60px;top:686.00px;font-size:24.5px;line-height:24.5px;font-weight:normal;color:#2366c9;transform:scaleX(0.9963)">What should we focus on to improve?</div>
<div class="t" style="left:25.20px;top:1068.00px;font-size:24.5px;line-height:24.5px;font-weight:normal;color:#2366c9;transform:scaleX(0.9786)">What are customers saying?</div>
<div class="t" style="left:47.63px;top:295.00px;font-size:18px;line-height:18px;font-weight:bold;color:#1b2436;transform:scaleX(0.9744)">Relationship NPS</div>
<div class="t" style="left:47.56px;top:324.00px;font-size:13.5px;line-height:13.5px;font-weight:normal;color:#6a7386;transform:scaleX(1.0447)">Last 6 Months to Date: Relationship NPS</div>
<div class="t" style="left:134.39px;top:440.00px;font-size:46px;line-height:46px;font-weight:bold;color:#1b2436;transform:scaleX(1.0102)">34</div>
<div class="t" style="left:151.80px;top:505.00px;font-size:16px;line-height:16px;font-weight:normal;color:#1b2436;transform:scaleX(0.9595)">+2</div>
<div class="t" style="left:95.70px;top:551.00px;font-size:14px;line-height:14px;font-weight:normal;color:#6a7386;transform:scaleX(1.0332)">–100</div>
<div class="t" style="left:192.76px;top:551.00px;font-size:14px;line-height:14px;font-weight:normal;color:#6a7386;transform:scaleX(1.0367)">100</div>
<div class="t" style="left:142.98px;top:576.00px;font-size:16px;line-height:16px;font-weight:normal;color:#1b2436;transform:scaleX(1.0152)">Prior 6 Months: 32</div>
<div class="t" style="left:442.60px;top:295.00px;font-size:18px;line-height:18px;font-weight:bold;color:#1b2436;transform:scaleX(0.9729)">Team Satisfaction</div>
<div class="t" style="left:441.55px;top:324.00px;font-size:13.5px;line-height:13.5px;font-weight:normal;color:#6a7386;transform:scaleX(1.0482)">Last 6 Months to Date: Team Satisfaction</div>
<div class="t" style="left:572.13px;top:440.00px;font-size:46px;line-height:46px;font-weight:bold;color:#1b2436;transform:scaleX(0.9717)">7.5</div>
<div class="t" style="left:587.80px;top:505.00px;font-size:16px;line-height:16px;font-weight:normal;color:#1b2436;transform:scaleX(0.9826)">–0.0</div>
<div class="t" style="left:562.90px;top:551.00px;font-size:14px;line-height:14px;font-weight:normal;color:#6a7386;transform:scaleX(0.9125)">0</div>
<div class="t" style="left:635.11px;top:551.00px;font-size:14px;line-height:14px;font-weight:normal;color:#6a7386;transform:scaleX(0.9942)">10</div>
<div class="t" style="left:534.99px;top:576.00px;font-size:16px;line-height:16px;font-weight:normal;color:#1b2436;transform:scaleX(1.0091)">Prior 6 Months: 7.6</div>
<div class="t" style="left:835.63px;top:295.00px;font-size:18px;line-height:18px;font-weight:bold;color:#1b2436;transform:scaleX(0.9732)">Product Satisfaction</div>
<div class="t" style="left:835.56px;top:324.00px;font-size:13.5px;line-height:13.5px;font-weight:normal;color:#6a7386;transform:scaleX(1.0365)">Last 6 Months to Date: Product Satisfac...</div>
<div class="t" style="left:966.05px;top:440.00px;font-size:46px;line-height:46px;font-weight:bold;color:#1b2436;transform:scaleX(0.9541)">7.1</div>
<div class="t" style="left:981.80px;top:505.00px;font-size:16px;line-height:16px;font-weight:normal;color:#1b2436;transform:scaleX(0.9602)">–0.1</div>
<div class="t" style="left:956.90px;top:551.00px;font-size:14px;line-height:14px;font-weight:normal;color:#6a7386;transform:scaleX(0.9125)">0</div>
<div class="t" style="left:1029.11px;top:551.00px;font-size:14px;line-height:14px;font-weight:normal;color:#6a7386;transform:scaleX(0.9942)">10</div>
<div class="t" style="left:929.00px;top:576.00px;font-size:16px;line-height:16px;font-weight:normal;color:#1b2436;transform:scaleX(1.0039)">Prior 6 Months: 7.1</div>
<div class="t" style="left:1230.60px;top:295.00px;font-size:18px;line-height:18px;font-weight:bold;color:#1b2436;transform:scaleX(0.9625)">Service Satisfaction</div>
<div class="t" style="left:1229.56px;top:324.00px;font-size:13.5px;line-height:13.5px;font-weight:normal;color:#6a7386;transform:scaleX(1.0368)">Last 6 Months to Date: Service Satisfact...</div>
<div class="t" style="left:1360.44px;top:440.00px;font-size:46px;line-height:46px;font-weight:bold;color:#1b2436;transform:scaleX(0.9615)">7.7</div>
<div class="t" style="left:1375.80px;top:505.00px;font-size:16px;line-height:16px;font-weight:normal;color:#1b2436;transform:scaleX(0.9602)">–0.1</div>
<div class="t" style="left:1350.90px;top:551.00px;font-size:14px;line-height:14px;font-weight:normal;color:#6a7386;transform:scaleX(0.9125)">0</div>
<div class="t" style="left:1423.11px;top:551.00px;font-size:14px;line-height:14px;font-weight:normal;color:#6a7386;transform:scaleX(0.9942)">10</div>
<div class="t" style="left:1322.98px;top:576.00px;font-size:16px;line-height:16px;font-weight:normal;color:#1b2436;transform:scaleX(1.0166)">Prior 6 Months: 7.8</div>
<div class="t" style="left:297.20px;top:412.00px;font-size:14px;line-height:14px;font-weight:normal;color:#1b2436;transform:scaleX(1.0044)">1,779</div>
<div class="t" style="left:297.00px;top:456.00px;font-size:14px;line-height:14px;font-weight:normal;color:#1b2436;transform:scaleX(1.0181)">987</div>
<div class="t" style="left:297.40px;top:500.00px;font-size:14px;line-height:14px;font-weight:normal;color:#1b2436;transform:scaleX(1.0181)">564</div>
<div class="t" style="left:48.40px;top:753.00px;font-size:18px;line-height:18px;font-weight:bold;color:#1b2436;transform:scaleX(0.9524)">Top 3 Focus Areas</div>
<div class="t" style="left:48.40px;top:781.00px;font-size:14px;line-height:14px;font-weight:normal;color:#6a7386;transform:scaleX(1.0050)">Time Period: Last 6 Months to Date</div>
<div class="t" style="left:88.00px;top:832.00px;font-size:28px;line-height:28px;font-weight:bold;color:#ffffff">1</div>
<div class="t" style="left:144.60px;top:846.00px;font-size:16px;line-height:16px;font-weight:bold;color:#1b2436;transform:scaleX(0.9696)">Service Quality</div>
<div class="t" style="left:88.50px;top:902.00px;font-size:28px;line-height:28px;font-weight:bold;color:#ffffff">2</div>
<div class="t" style="left:144.60px;top:916.00px;font-size:16px;line-height:16px;font-weight:bold;color:#1b2436;transform:scaleX(0.9672)">Service Value</div>
<div class="t" style="left:88.50px;top:972.00px;font-size:28px;line-height:28px;font-weight:bold;color:#ffffff">3</div>
<div class="t" style="left:144.60px;top:986.00px;font-size:16px;line-height:16px;font-weight:bold;color:#1b2436;transform:scaleX(0.9554)">Service Communication</div>
<div class="t" style="left:47.83px;top:1135.00px;font-size:18px;line-height:18px;font-weight:bold;color:#1b2436;transform:scaleX(0.9724)">Most Mentioned Topics</div>
<div class="t" style="left:48.60px;top:1163.00px;font-size:14px;line-height:14px;font-weight:normal;color:#6a7386">Time Period: Last 6 Months to Date | Reporting Date: Response Date | Question: Relationship NPS</div>
<div class="t" style="left:52.50px;top:1210.00px;font-size:16px;line-height:16px;font-weight:bold;color:#1b2436;transform:scaleX(0.9343)">Top Topics</div>
<div class="t" style="left:655.80px;top:1211.00px;font-size:14px;line-height:14px;font-weight:normal;color:#6a7386;transform:scaleX(0.9817)"># of Responses</div>
<div class="t" style="left:68.30px;top:1258.00px;font-size:15px;line-height:15px;font-weight:normal;color:#2d6fcd;transform:scaleX(0.9589)">Support - Tickets</div>
<div class="t" style="left:716.60px;top:1259.00px;font-size:16px;line-height:16px;font-weight:bold;color:#1b2436">373</div>
<div class="t" style="left:68.30px;top:1298.00px;font-size:15px;line-height:15px;font-weight:normal;color:#2d6fcd;transform:scaleX(0.9681)">Staff - Helpfulness</div>
<div class="t" style="left:716.60px;top:1299.00px;font-size:16px;line-height:16px;font-weight:bold;color:#1b2436">246</div>
<div class="t" style="left:67.35px;top:1338.00px;font-size:15px;line-height:15px;font-weight:normal;color:#2d6fcd;transform:scaleX(0.9542)">Brand - Relationship</div>
<div class="t" style="left:716.60px;top:1339.00px;font-size:16px;line-height:16px;font-weight:bold;color:#1b2436">235</div>
<div class="t" style="left:68.30px;top:1378.00px;font-size:15px;line-height:15px;font-weight:normal;color:#2d6fcd;transform:scaleX(0.9590)">Support - Timeliness</div>
<div class="t" style="left:716.60px;top:1379.00px;font-size:16px;line-height:16px;font-weight:bold;color:#1b2436">235</div>
<div class="t" style="left:68.30px;top:1418.00px;font-size:15px;line-height:15px;font-weight:normal;color:#2d6fcd;transform:scaleX(0.9674)">Support - Follow Up</div>
<div class="t" style="left:716.60px;top:1419.00px;font-size:16px;line-height:16px;font-weight:bold;color:#1b2436">184</div>
<div class="t" style="left:67.35px;top:1458.00px;font-size:15px;line-height:15px;font-weight:normal;color:#2d6fcd;transform:scaleX(0.9513)">Implementations/Upgrades - Ease of Installation/Upgrade</div>
<div class="t" style="left:716.60px;top:1459.00px;font-size:16px;line-height:16px;font-weight:bold;color:#1b2436">151</div>
<div class="t" style="left:68.30px;top:1498.00px;font-size:15px;line-height:15px;font-weight:normal;color:#2d6fcd;transform:scaleX(0.9438)">Support - Issue Resolution</div>
<div class="t" style="left:716.60px;top:1499.00px;font-size:16px;line-height:16px;font-weight:bold;color:#1b2436">127</div>
<div class="t" style="left:68.30px;top:1538.00px;font-size:15px;line-height:15px;font-weight:normal;color:#2d6fcd;transform:scaleX(0.9502)">Staff - Sales</div>
<div class="t" style="left:725.50px;top:1539.00px;font-size:16px;line-height:16px;font-weight:bold;color:#1b2436">98</div>
<div class="t" style="left:67.36px;top:1578.00px;font-size:15px;line-height:15px;font-weight:normal;color:#2d6fcd;transform:scaleX(0.9430)">Brand - Likelihood to Recommend</div>
<div class="t" style="left:725.50px;top:1579.00px;font-size:16px;line-height:16px;font-weight:bold;color:#1b2436">88</div>
<div class="t" style="left:835.43px;top:1135.00px;font-size:18px;line-height:18px;font-weight:bold;color:#1b2436;transform:scaleX(0.9727)">Emerging Themes</div>
<div class="t" style="left:836.40px;top:1163.00px;font-size:14px;line-height:14px;font-weight:normal;color:#6a7386;transform:scaleX(1.0034)">Time Period: Last 6 Months to Date | Benchmark: Prior 6 Months</div>
<div class="t" style="left:843.20px;top:1217.00px;font-size:14px;line-height:14px;font-weight:bold;color:#1b2436;transform:scaleX(0.9144)">Rank</div>
<div class="t" style="left:888.30px;top:1217.00px;font-size:14px;line-height:14px;font-weight:bold;color:#1b2436;transform:scaleX(0.9771)">Theme</div>
<div class="t" style="left:1322.00px;top:1217.00px;font-size:14px;line-height:14px;font-weight:bold;color:#1b2436;transform:scaleX(0.9755)">Volume Change</div>
<div class="t" style="left:1437.60px;top:1217.00px;font-size:14px;line-height:14px;font-weight:bold;color:#1b2436;transform:scaleX(0.9860)">Sentiment Trend</div>
<div class="t" style="left:866.60px;top:1258.00px;font-size:14px;line-height:14px;font-weight:normal;color:#1b2436">1</div>
<div class="t" style="left:887.41px;top:1257.00px;font-size:15px;line-height:15px;font-weight:normal;color:#2d6fcd;transform:scaleX(0.8872)">Face Issue</div>
<div class="t" style="left:1392.30px;top:1260.00px;font-size:12px;line-height:12px;font-weight:normal;color:#ffffff;transform:scaleX(0.9662)">NEW</div>
<div class="t" style="left:866.60px;top:1299.00px;font-size:14px;line-height:14px;font-weight:normal;color:#1b2436">2</div>
<div class="t" style="left:888.30px;top:1298.00px;font-size:15px;line-height:15px;font-weight:normal;color:#2d6fcd;transform:scaleX(0.9588)">Collaboration Internal</div>
<div class="t" style="left:1392.30px;top:1301.00px;font-size:12px;line-height:12px;font-weight:normal;color:#ffffff;transform:scaleX(0.9662)">NEW</div>
<div class="t" style="left:866.60px;top:1340.00px;font-size:14px;line-height:14px;font-weight:normal;color:#1b2436">3</div>
<div class="t" style="left:887.35px;top:1339.00px;font-size:15px;line-height:15px;font-weight:normal;color:#2d6fcd;transform:scaleX(0.9531)">Deadline Van</div>
<div class="t" style="left:1392.30px;top:1342.00px;font-size:12px;line-height:12px;font-weight:normal;color:#ffffff;transform:scaleX(0.9662)">NEW</div>
<div class="t" style="left:866.60px;top:1381.00px;font-size:14px;line-height:14px;font-weight:normal;color:#1b2436">4</div>
<div class="t" style="left:887.35px;top:1380.00px;font-size:15px;line-height:15px;font-weight:normal;color:#2d6fcd;transform:scaleX(0.9519)">Internal Group</div>
<div class="t" style="left:1392.30px;top:1383.00px;font-size:12px;line-height:12px;font-weight:normal;color:#ffffff;transform:scaleX(0.9662)">NEW</div>
<div class="t" style="left:866.60px;top:1422.00px;font-size:14px;line-height:14px;font-weight:normal;color:#1b2436">5</div>
<div class="t" style="left:888.30px;top:1421.00px;font-size:15px;line-height:15px;font-weight:normal;color:#2d6fcd;transform:scaleX(0.9731)">Staff Help</div>
<div class="t" style="left:1392.30px;top:1424.00px;font-size:12px;line-height:12px;font-weight:normal;color:#ffffff;transform:scaleX(0.9662)">NEW</div>
<div class="t" style="left:866.60px;top:1463.00px;font-size:14px;line-height:14px;font-weight:normal;color:#1b2436">6</div>
<div class="t" style="left:887.37px;top:1462.00px;font-size:15px;line-height:15px;font-weight:normal;color:#2d6fcd;transform:scaleX(0.9346)">En Door</div>
<div class="t" style="left:1392.30px;top:1465.00px;font-size:12px;line-height:12px;font-weight:normal;color:#ffffff;transform:scaleX(0.9662)">NEW</div>
<div class="t" style="left:866.60px;top:1504.00px;font-size:14px;line-height:14px;font-weight:normal;color:#1b2436">7</div>
<div class="t" style="left:887.38px;top:1503.00px;font-size:15px;line-height:15px;font-weight:normal;color:#2d6fcd;transform:scaleX(0.9179)">Process Move</div>
<div class="t" style="left:1392.30px;top:1506.00px;font-size:12px;line-height:12px;font-weight:normal;color:#ffffff;transform:scaleX(0.9662)">NEW</div>
<div class="t" style="left:866.60px;top:1545.00px;font-size:14px;line-height:14px;font-weight:normal;color:#1b2436">8</div>
<div class="t" style="left:888.30px;top:1544.00px;font-size:15px;line-height:15px;font-weight:normal;color:#2d6fcd;transform:scaleX(0.9268)">Government Service</div>
<div class="t" style="left:1392.30px;top:1547.00px;font-size:12px;line-height:12px;font-weight:normal;color:#ffffff;transform:scaleX(0.9662)">NEW</div>
<div class="t" style="left:866.60px;top:1586.00px;font-size:14px;line-height:14px;font-weight:normal;color:#1b2436">9</div>
<div class="t" style="left:887.37px;top:1585.00px;font-size:15px;line-height:15px;font-weight:normal;color:#2d6fcd;transform:scaleX(0.9270)">Message Site</div>
<div class="t" style="left:1392.30px;top:1588.00px;font-size:12px;line-height:12px;font-weight:normal;color:#ffffff;transform:scaleX(0.9662)">NEW</div>
</body></html>
